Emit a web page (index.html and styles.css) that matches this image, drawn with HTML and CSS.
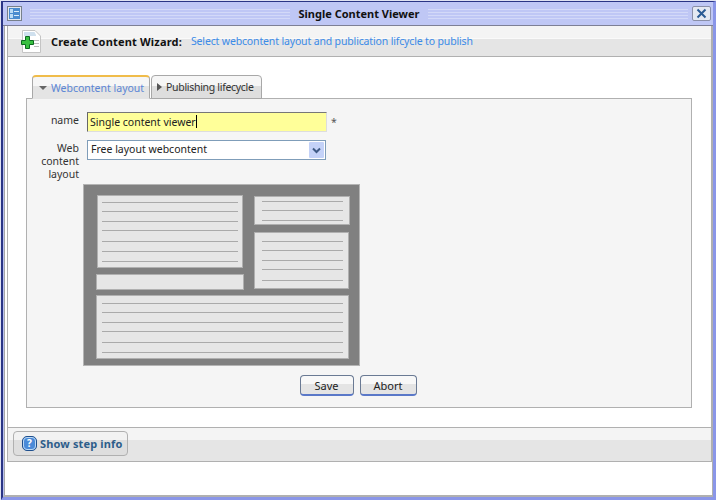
FILE: index.html
```html
<!DOCTYPE html>
<html lang="en">
<head>
    <meta charset="UTF-8">
    <title>Single Content Viewer</title>
    <link rel="stylesheet" href="styles.css">
</head>
<body>
    <div class="window">
        <div class="titlebar">
            <span class="title-icon">
                <svg width="15" height="15" viewBox="0 0 15 15">
                    <rect x="0.5" y="0.5" width="14" height="14" fill="#e4e8ee" stroke="#77808c"/>
                    <rect x="2" y="2" width="11" height="11" fill="#4b8ccf"/>
                    <rect x="3" y="3" width="3" height="4" fill="#bcdcf6"/>
                    <rect x="3" y="8" width="3" height="4" fill="#bcdcf6"/>
                    <rect x="7" y="5" width="5" height="1" fill="#dcecf8"/>
                    <rect x="7" y="9" width="5" height="1" fill="#dcecf8"/>
                </svg>
            </span>
            <span class="title-lines"></span>
            <span class="title-text">Single Content Viewer</span>
            <span class="title-lines"></span>
            <span class="close-btn">
                <svg width="11" height="11" viewBox="0 0 11 11">
                    <path d="M1.5 1.5 L9.5 9.5 M9.5 1.5 L1.5 9.5" stroke="#2a5a94" stroke-width="2" fill="none"/>
                </svg>
            </span>
        </div>

        <div class="window-body">
            <div class="panel">
                <div class="wizard-head">
                    <svg class="wizard-icon" width="21" height="23" viewBox="0 0 21 23">
                        <path d="M1.5 0.5 H14 L19.5 6 V22.5 H1.5 Z" fill="#fff" stroke="#c4c4c4"/>
                        <path d="M3 2 H13.5 L15 5 V6 H3 Z" fill="#cfe0ee"/>
                        <rect x="13" y="10" width="5" height="1" fill="#bbb"/>
                        <rect x="13" y="13" width="5" height="1" fill="#bbb"/>
                        <rect x="13" y="16" width="5" height="1" fill="#bbb"/>
                        <path d="M4.5 6.5 H8.5 V10.5 H12.5 V14.5 H8.5 V18.5 H4.5 V14.5 H0.5 V10.5 H4.5 Z" fill="#38c040" stroke="#0c6a20"/>
                    </svg>
                    <strong class="wizard-name">Create Content Wizard:</strong>
                    <span class="wizard-step">Select webcontent layout and publication lifcycle to publish</span>
                </div>

                <div class="wizard-body">
                    <div class="tabs">
                        <div class="tab tab-active"><span class="arrow-down"></span>Webcontent layout</div>
                        <div class="tab tab-second"><span class="arrow-right"></span>Publishing lifecycle</div>
                    </div>
                    <div class="tab-content">
                        <div class="form-row">
                            <label class="form-label label-name">name</label>
                            <div class="text-input">Single content viewer<span class="caret"></span></div>
                            <span class="required">*</span>
                        </div>
                        <div class="form-row row-layout">
                            <label class="form-label">Web content layout</label>
                            <div class="select-box">
                                <span>Free layout webcontent</span>
                                <span class="select-btn">
                                    <svg width="9" height="7" viewBox="0 0 9 7"><path d="M1 1.5 L4.5 5 L8 1.5" stroke="#3f5a85" stroke-width="2" fill="none"/></svg>
                                </span>
                            </div>
                        </div>

                        <svg class="preview" width="277" height="182" viewBox="83 184 277 182">
                            <rect x="83.5" y="184.5" width="276" height="181" fill="#808080" stroke="#b4b4b4"/>
                            <g fill="#e6e6e6" stroke="#b0b0b0">
                                <rect x="97.5" y="195.5" width="145" height="72"/>
                                <rect x="254.5" y="196.5" width="95" height="28"/>
                                <rect x="254.5" y="232.5" width="94" height="56"/>
                                <rect x="96.5" y="274.5" width="147" height="15"/>
                                <rect x="96.5" y="295.5" width="252" height="63"/>
                            </g>
                            <path stroke="#aaa" fill="none" d="M102 202.5H238M102 211.5H238M102 221.5H238M102 230.5H238M102 241.5H238M102 251.5H238M102 261.5H238
                                M262 201.5H343M262 210.5H343M262 220.5H343
                                M262 241.5H343M262 250.5H343M262 260.5H343M262 269.5H343M262 280.5H343
                                M102 303.5H343M102 312.5H343M102 322.5H343M102 331.5H343M102 342.5H343M102 352.5H343"/>
                        </svg>

                        <div class="actions">
                            <button class="btn">Save</button>
                            <button class="btn btn-abort">Abort</button>
                        </div>
                    </div>
                </div>

                <div class="wizard-foot">
                    <button class="info-btn">
                        <svg width="15" height="15" viewBox="0 0 15 15">
                            <rect x="0.5" y="0.5" width="14" height="14" rx="4.5" fill="#4a8ad8" stroke="#1f4f8c"/>
                            <rect x="1.5" y="1.5" width="12" height="12" rx="3.5" fill="none" stroke="#bcd8f4"/>
                            <text x="7.5" y="11" text-anchor="middle" class="info-mark">?</text>
                        </svg>
                        <span>Show step info</span>
                    </button>
                </div>
            </div>
        </div>
    </div>
</body>
</html>
```

FILE: styles.css
```css
* {
    box-sizing: border-box;
}

html, body {
    margin: 0;
    height: 100%;
    background: #dfe2f2;
    font-family: "Noto Sans", sans-serif;
    font-size: 10.5px;
    overflow: hidden;
}

.window {
    height: 499px;
    margin: 1px 0 0 1px;
    display: flex;
    flex-direction: column;
    background: #fff;
    border-top: 1px solid #2a3585;
    border-left: 2px solid #2a3585;
    border-right: 3px solid #8a96e8;
    border-bottom: 3px solid #8a96e8;
}

.titlebar {
    height: 24px;
    flex: none;
    display: flex;
    align-items: center;
    padding: 0 2px 0 4px;
    background: #bfc7f5;
    border-bottom: 1px solid #7d7f95;
}

.title-icon {
    width: 15px;
    height: 15px;
    margin-right: 8px;
}

.title-lines {
    flex: 1;
    height: 13px;
    background: repeating-linear-gradient(#bfc7f5 0, #bfc7f5 2px, #d3d9f8 2px, #d3d9f8 3px);
}

.title-text {
    padding: 0 8px;
    font-size: 11px;
    font-weight: bold;
    color: #111;
}

.close-btn {
    width: 19px;
    height: 15px;
    margin-left: 4px;
    display: flex;
    align-items: center;
    justify-content: center;
    background: #e4e8f2;
    border: 1px solid #8a8fa8;
    border-radius: 2px;
}

.window-body {
    flex: 1;
    display: flex;
    border-left: 1px solid #b8c0f0;
    border-bottom: 2px solid #b0b0b0;
    box-shadow: inset 1px 0 #a8a8a8, inset -1px 0 #b0b0b0;
    padding: 0 1px 33px 3px;
}

.panel {
    flex: 1;
    display: flex;
    flex-direction: column;
    border-left: 1px solid #b0b0b0;
    border-right: 1px solid #b0b0b0;
    border-bottom: 1px solid #b0b0b0;
}

.wizard-head {
    height: 31px;
    flex: none;
    display: flex;
    align-items: center;
    background: linear-gradient(#f4f4f4 0, #f4f4f4 12px, #fafafa 12px, #fafafa 13px, #e5e5e5 13px);
    border-bottom: 1px solid #b0b0b0;
    padding-left: 13px;
}

.wizard-icon {
    margin-right: 9px;
    flex: none;
}

.wizard-name {
    font-size: 11px;
    letter-spacing: 0.18px;
    color: #111;
    margin-right: 9px;
}

.wizard-step {
    letter-spacing: -0.15px;
    color: #3b8be8;
}

.wizard-body {
    flex: 1;
    padding: 18px 19px 19px 18px;
    display: flex;
    flex-direction: column;
}

.tabs {
    display: flex;
    margin-left: 6px;
    gap: 1px;
    height: 24px;
    position: relative;
    z-index: 1;
}

.tab {
    width: 111px;
    padding-left: 5px;
    display: flex;
    align-items: center;
    white-space: nowrap;
    color: #333;
    background: linear-gradient(#f6f6f6 0, #f6f6f6 10px, #dedede 10px);
    border: 1px solid #a8a8a8;
    border-radius: 4px 4px 0 0;
}

.tab-second {
    letter-spacing: -0.3px;
}

.tab-active {
    width: 118px;
    padding-left: 6px;
    color: #5b86d6;
    background: linear-gradient(#f6f6f6 0, #f6f6f6 9px, #e4e4e4 9px);
    border-top: 2px solid #f0bc4a;
    border-bottom: 1px solid #e4e4e4;
}

.arrow-down {
    width: 0;
    height: 0;
    margin-right: 4px;
    border-left: 4px solid transparent;
    border-right: 4px solid transparent;
    border-top: 4px solid #666;
}

.arrow-right {
    width: 0;
    height: 0;
    margin-right: 4px;
    border-top: 4px solid transparent;
    border-bottom: 4px solid transparent;
    border-left: 5px solid #555;
}

.tab-content {
    flex: 1;
    margin-top: -1px;
    background: #f5f5f5;
    border: 1px solid #b0b0b0;
    padding-top: 13px;
}

.form-row {
    display: flex;
}

.form-label {
    width: 52px;
    padding-left: 6px;
    text-align: right;
    color: #333;
    line-height: 13px;
}

.label-name {
    padding-top: 2px;
}

.text-input {
    width: 240px;
    height: 20px;
    margin-left: 8px;
    padding-left: 2px;
    line-height: 18px;
    background: #ffff99;
    border: 1px solid #ddd;
    border-left: 1px solid #666;
    border-top: 1px solid #777;
    color: #222;
    white-space: nowrap;
}

.caret {
    display: inline-block;
    width: 1px;
    height: 13px;
    background: #000;
    vertical-align: -2px;
}

.required {
    margin-left: 4px;
    line-height: 21px;
    color: #555;
}

.row-layout {
    margin-top: 7px;
}

.row-layout .form-label {
    padding-top: 2px;
}

.select-box {
    width: 239px;
    height: 20px;
    margin-left: 8px;
    padding: 0 1px 2px 3px;
    display: flex;
    align-items: center;
    justify-content: space-between;
    background: #fff;
    border: 1px solid #7f9db9;
    color: #222;
}

.select-btn {
    width: 15px;
    height: 16px;
    margin-bottom: -2px;
    display: flex;
    align-items: center;
    justify-content: center;
    background: #c4d2f8;
    border-radius: 1px;
}

.preview {
    display: block;
    margin: 3px 0 0 56px;
}

.actions {
    display: flex;
    justify-content: center;
    gap: 6px;
    margin: 9px 2px 0 0;
}

.btn {
    width: 54px;
    height: 21px;
    padding: 0;
    font-family: inherit;
    font-size: 11px;
    color: #222;
    background: linear-gradient(#f8f8f8 0, #f8f8f8 8px, #e4e4e4 8px);
    border: 1px solid #6a7a94;
    border-bottom: 2px solid #5a78c8;
    border-radius: 4px;
}

.btn-abort {
    width: 57px;
}

.wizard-foot {
    height: 34px;
    flex: none;
    padding: 3px 0 0 5px;
    background: linear-gradient(#f4f4f4 0, #f4f4f4 12px, #e5e5e5 12px);
    border-top: 1px solid #b0b0b0;
}

.info-btn {
    width: 115px;
    height: 25px;
    display: flex;
    align-items: center;
    gap: 3px;
    padding: 0 0 0 8px;
    font-family: inherit;
    font-size: 11px;
    font-weight: bold;
    letter-spacing: 0.15px;
    color: #2d5d8a;
    white-space: nowrap;
    background: linear-gradient(#f2f2f2 0, #f2f2f2 8px, #dedede 8px);
    border: 1px solid #b0b0b0;
    border-radius: 4px;
}

.info-mark {
    font-size: 10px;
    font-weight: bold;
    fill: #fff;
}
```
